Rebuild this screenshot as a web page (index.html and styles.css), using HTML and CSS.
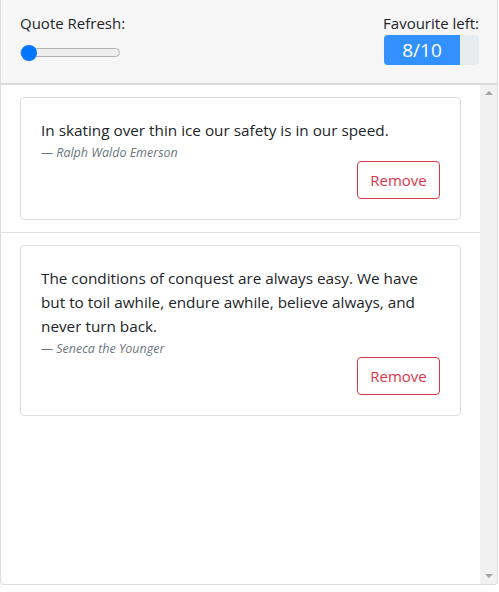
FILE: index.html
```html
<!DOCTYPE html>
<html>
<head>
<meta charset="utf-8">
<link rel="stylesheet" href="styles.css">
</head>
<body>
<div class="app">
  <header class="topbar">
    <div class="refresh">
      <label class="label" for="rate">Quote Refresh:</label>
      <input id="rate" class="slider" type="range" min="0" max="10" value="0">
    </div>
    <div class="favs">
      <div class="label">Favourite left:</div>
      <div class="progress"><div class="progress-bar" style="width:80%">8/10</div></div>
    </div>
  </header>
  <div class="body">
    <ul class="list">
      <li class="item">
        <div class="card">
          <p class="quote">In skating over thin ice our safety is in our speed.</p>
          <div class="author">— Ralph Waldo Emerson</div>
          <div class="actions"><button class="btn-remove">Remove</button></div>
        </div>
      </li>
      <li class="item">
        <div class="card">
          <p class="quote">The conditions of conquest are always easy. We have but to toil awhile, endure awhile, believe always, and never turn back.</p>
          <div class="author">— Seneca the Younger</div>
          <div class="actions"><button class="btn-remove">Remove</button></div>
        </div>
      </li>
    </ul>
    <div class="scrollbar">
      <span class="arrow up"></span>
      <span class="arrow down"></span>
    </div>
  </div>
</div>
</body>
</html>
```
FILE: styles.css
```css
* { box-sizing: border-box; }
html, body { margin: 0; padding: 0; background: #fff; }
body {
  font-family: "Open Sans", "Noto Sans", sans-serif;
  font-size: 15px;
  color: #212529;
}
.app {
  width: 498px;
  height: 585px;
  border: 1px solid #dcdcdc;
  border-top: none;
  border-radius: 0 0 4px 4px;
  display: flex;
  flex-direction: column;
  overflow: hidden;
}
.topbar {
  background: #f6f6f6;
  border-bottom: 2px solid #dadada;
  display: flex;
  justify-content: space-between;
  padding: 11px 18px 18px 19px;
  height: 85px;
}
.label {
  display: block;
  font-size: 15px;
  line-height: 24px;
  color: #212529;
}
.refresh { display: flex; flex-direction: column; }
.slider {
  -webkit-appearance: none;
  appearance: none;
  width: 100px;
  height: 9px;
  margin: 13px 0 0 0;
  background: #efefef;
  border: 1px solid #b2b2b2;
  border-radius: 5px;
  outline: none;
}
.slider::-webkit-slider-thumb {
  -webkit-appearance: none;
  width: 16px;
  height: 16px;
  border-radius: 50%;
  background: #0075ff;
  border: none;
}
.favs { display: flex; flex-direction: column; align-items: flex-end; }
.progress {
  width: 95px;
  height: 30px;
  background: #e9ecef;
  border-radius: 4px;
  overflow: hidden;
  display: flex;
}
.progress-bar {
  background: #3391ff;
  color: #fff;
  font-size: 19px;
  line-height: 30px;
  text-align: center;
}
.body { flex: 1; display: flex; min-height: 0; }
.list { flex: 1; list-style: none; margin: 0; padding: 0; }
.item { padding: 12px 19px; }
.item:not(:last-child) { border-bottom: 1px solid #dfdfdf; }
.card {
  border: 1px solid #dfdfdf;
  border-radius: 4px;
  padding: 20px;
}
.quote {
  margin: 0;
  font-size: 15.3px;
  line-height: 24px;
  color: #212529;
}
.author {
  font-size: 12.5px;
  line-height: 17px;
  margin-top: 2px;
  font-style: italic;
  color: #6c757d;
}
.actions { display: flex; justify-content: flex-end; }
.btn-remove {
  width: 83px;
  height: 38px;
  font-family: inherit;
  font-size: 15px;
  color: #dc3545;
  background: #fff;
  border: 1px solid #dc3545;
  border-radius: 4px;
  padding: 0;
}
.scrollbar {
  width: 17px;
  background: #f1f1f1;
  display: flex;
  flex-direction: column;
  justify-content: space-between;
  align-items: center;
  padding: 6px 0 6px;
}
.arrow {
  width: 0; height: 0;
  border-left: 4px solid transparent;
  border-right: 4px solid transparent;
}
.arrow.up { border-bottom: 4px solid #a3a3a3; }
.arrow.down { border-top: 4px solid #a3a3a3; }
```
